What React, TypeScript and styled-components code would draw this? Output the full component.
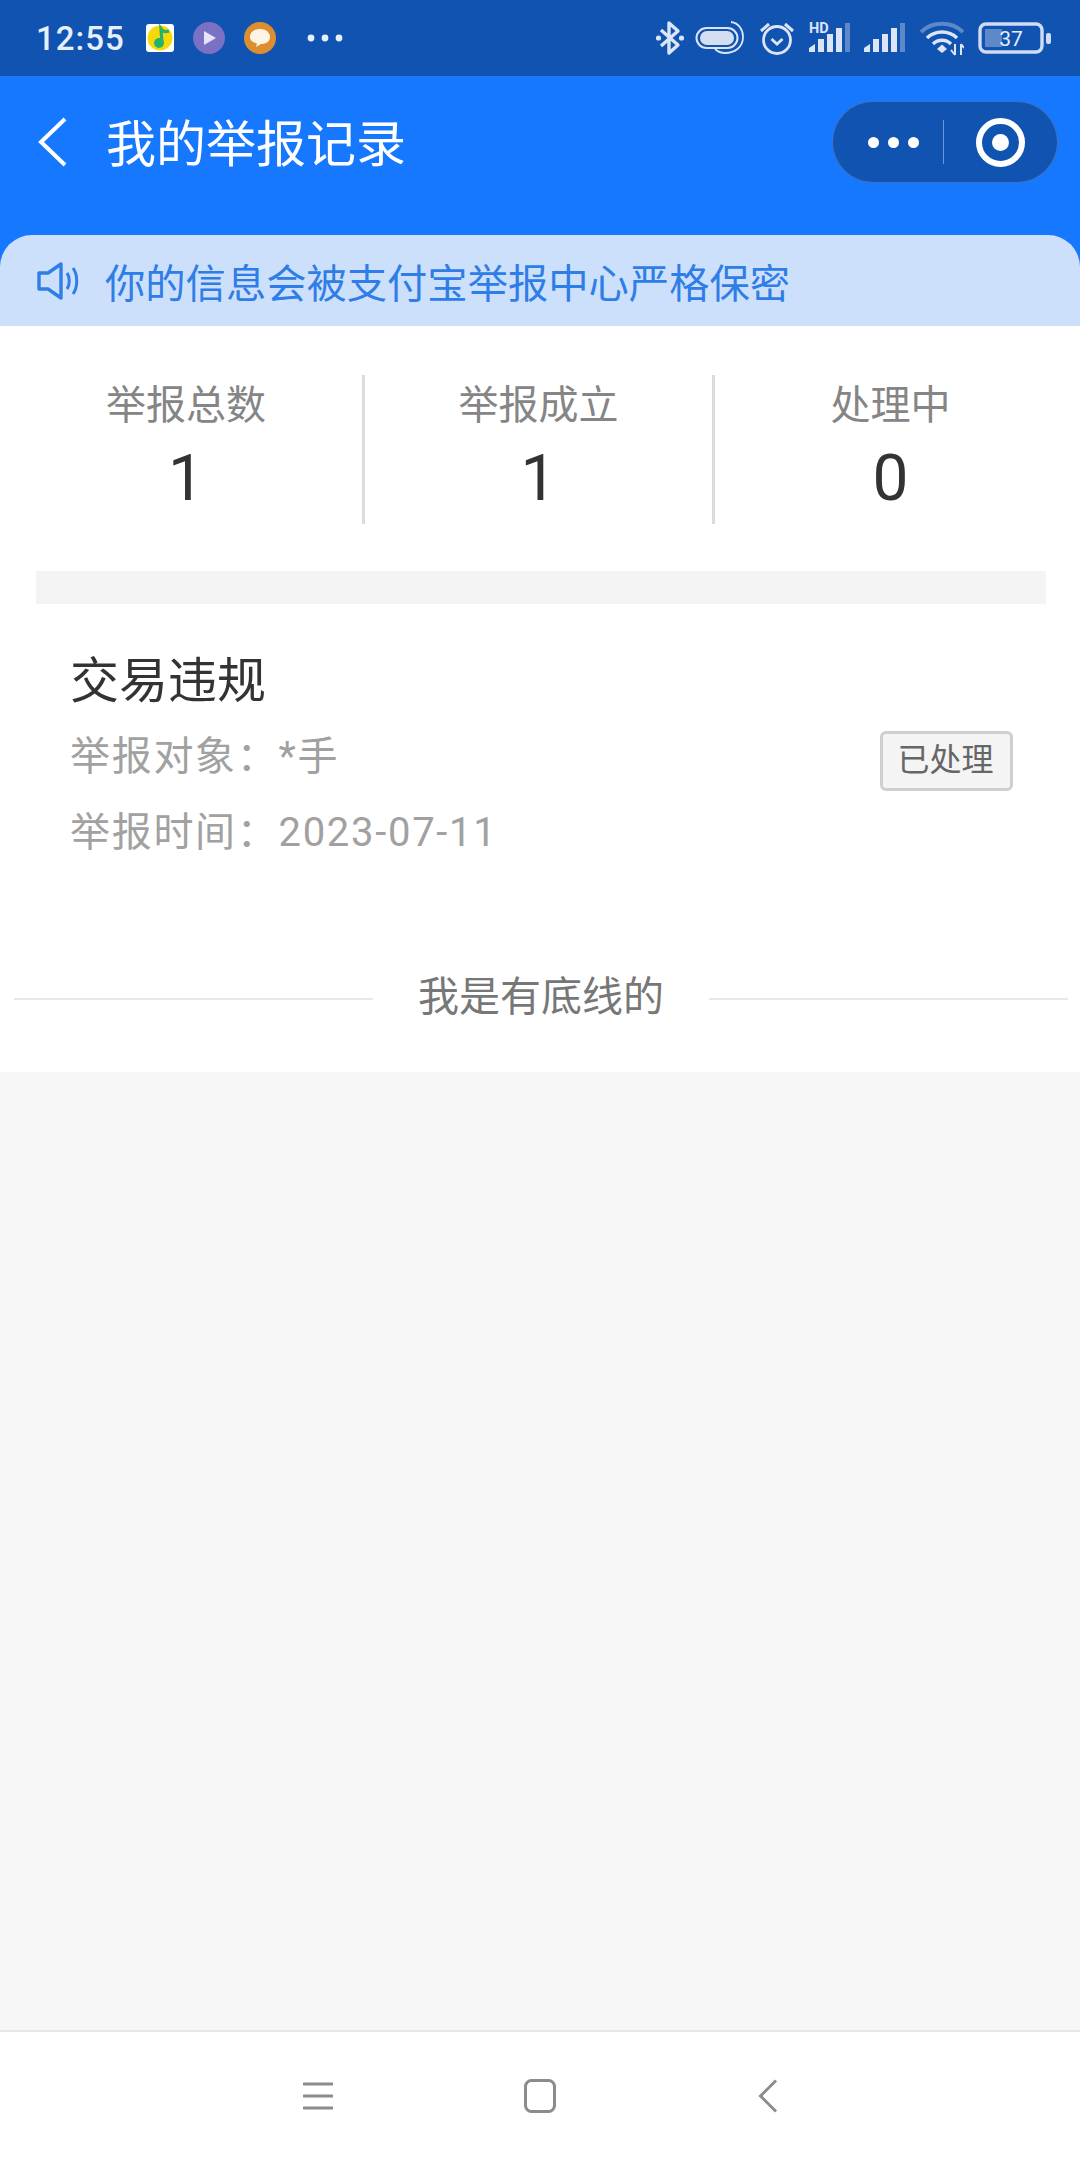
import React from "react";
import styled, { createGlobalStyle } from "styled-components";

const Global = createGlobalStyle`
  html, body { margin: 0; padding: 0; background: #f7f7f7; }
  * { box-sizing: border-box; }
  body { font-family: Roboto, "Noto Sans CJK SC", sans-serif; }
`;

const Page = styled.div`
  width: 1080px;
  height: 2160px;
  display: flex;
  flex-direction: column;
  background: #f7f7f7;
  overflow: hidden;
`;

const StatusBar = styled.div`
  height: 76px;
  flex: none;
  background: #1153b1;
  display: flex;
  align-items: center;
  justify-content: space-between;
  padding: 0 27px 0 36px;
`;

const StatusGroup = styled.div<{ $gap: number }>`
  display: flex;
  align-items: center;
  gap: ${(p) => p.$gap}px;
`;

const Clock = styled.span`
  font-size: 33px;
  font-weight: 500;
  letter-spacing: 1px;
  color: #e6effb;
  margin-right: 2px;
  line-height: 1;
`;

const StatusSvg = styled.svg<{ $nudge?: number }>`
  display: block;
  flex: none;
  margin-left: ${(p) => p.$nudge ?? 0}px;
`;

const HeaderBlock = styled.div`
  flex: none;
  height: 250px;
  background: #1677ff;
  display: flex;
  flex-direction: column;
  justify-content: space-between;
`;

const NavRow = styled.div`
  display: flex;
  align-items: center;
  justify-content: space-between;
  padding: 25px 22px 0 36px;
`;

const NavLeft = styled.div`
  display: flex;
  align-items: center;
  gap: 38px;
`;

const NavTitle = styled.h1`
  margin: 0 0 4px;
  font-family: "Noto Sans CJK SC", sans-serif;
  font-size: 50px;
  font-weight: 400;
  line-height: 1;
  color: #fff;
`;

const Capsule = styled.div`
  width: 226px;
  height: 82px;
  border-radius: 41px;
  background: #1153b1;
  border: 1px solid rgba(255, 255, 255, 0.18);
  display: flex;
  align-items: center;
`;

const CapsuleMenu = styled.div`
  width: 111px;
  height: 44px;
  display: flex;
  align-items: center;
  justify-content: center;
  gap: 9px;
  border-right: 1px solid rgba(255, 255, 255, 0.4);
  padding-left: 10px;
`;

const CapsuleDot = styled.span`
  width: 11px;
  height: 11px;
  border-radius: 50%;
  background: #fff;
`;

const CapsuleTarget = styled.div`
  flex: 1;
  display: flex;
  align-items: center;
  justify-content: center;
`;

const TargetRing = styled.span`
  width: 49px;
  height: 49px;
  border-radius: 50%;
  border: 6px solid #fff;
  display: flex;
  align-items: center;
  justify-content: center;
  &::after {
    content: "";
    width: 17px;
    height: 17px;
    border-radius: 50%;
    background: #fff;
  }
`;

const Notice = styled.div`
  height: 91px;
  background: #cde0fb;
  border-radius: 32px 32px 0 0;
  display: flex;
  align-items: center;
  gap: 26px;
  padding-left: 37px;
  font-family: "Noto Sans CJK SC", sans-serif;
  font-size: 40.3px;
  line-height: 1;
  color: #2f7de6;
`;

const NoticeText = styled.span`
  margin-top: 2px;
`;

const Sheet = styled.div`
  flex: none;
  height: 746px;
  background: #fff;
  display: flex;
  flex-direction: column;
`;

const Stats = styled.div`
  margin-top: 49px;
  height: 149px;
  display: grid;
  grid-template-columns: 355px 350px 1fr;
  padding: 0 14px 0 10px;
`;

const Stat = styled.div<{ $divider?: boolean }>`
  display: flex;
  flex-direction: column;
  align-items: center;
  padding-top: 2px;
  border-right: ${(p) => (p.$divider ? "3px solid #dcdcdc" : "none")};
`;

const StatLabel = styled.span`
  font-family: "Noto Sans CJK SC", sans-serif;
  font-size: 40px;
  line-height: 50px;
  color: #858585;
`;

const StatValue = styled.span`
  font-family: Roboto, sans-serif;
  font-size: 64px;
  line-height: 70px;
  margin-top: 17px;
  color: #333;
`;

const Band = styled.div`
  margin: 47px 34px 0 36px;
  height: 33px;
  background: #f4f4f4;
`;

const Card = styled.div`
  display: flex;
  align-items: flex-start;
  justify-content: space-between;
  padding: 46px 67px 0 70px;
`;

const CardBody = styled.div`
  display: flex;
  flex-direction: column;
`;

const CardTitle = styled.h2`
  margin: 0 0 15px;
  font-family: "Noto Sans CJK SC", sans-serif;
  font-size: 49px;
  line-height: 54px;
  font-weight: 400;
  color: #333;
`;

const CardMeta = styled.span`
  font-family: Roboto, "Noto Sans CJK SC", sans-serif;
  font-size: 40px;
  line-height: 76px;
  letter-spacing: 1.7px;
  color: #a1a1a1;
`;

const Badge = styled.span`
  width: 133px;
  height: 60px;
  margin-top: 81px;
  border: 3px solid #cfcfcf;
  border-radius: 6px;
  background: #f4f4f4;
  display: flex;
  align-items: center;
  justify-content: center;
  padding: 0 2px 8px 0;
  font-family: "Noto Sans CJK SC", sans-serif;
  font-size: 32px;
  line-height: 1;
  color: #666;
`;

const Baseline = styled.div`
  margin-top: 97px;
  padding: 0 12px 0 14px;
  display: flex;
  align-items: center;
  gap: 45px;
  font-family: "Noto Sans CJK SC", sans-serif;
  font-size: 41px;
  line-height: 50px;
  color: #777;
  &::before,
  &::after {
    content: "";
    flex: 1;
    height: 2px;
    background: #e8e8e8;
    margin-top: 11px;
  }
`;

const Spacer = styled.div`
  flex: 1;
`;

const NavBar = styled.div`
  flex: none;
  height: 130px;
  background: #fff;
  border-top: 2px solid #e8e8e8;
  display: flex;
  align-items: center;
  justify-content: center;
`;

const NavSlot = styled.div`
  width: 222px;
  display: flex;
  justify-content: center;
`;

const ChevronSlot = styled(NavSlot)`
  padding-left: 12px;
`;

const StatusIcons = () => (
  <StatusGroup $gap={13}>
    <StatusSvg width="30" height="36" viewBox="0 0 30 36" fill="none">
      <path d="M6 10 L23 25 L14 33 V3 L23 11 L6 26" stroke="#dbe5f6" strokeWidth="3.4" strokeLinejoin="round" />
      <circle cx="3.5" cy="18" r="2.6" fill="#dbe5f6" />
      <circle cx="26.5" cy="18" r="2.6" fill="#dbe5f6" />
    </StatusSvg>
    <StatusSvg $nudge={-3} width="50" height="36" viewBox="0 0 50 36" fill="none">
      <rect x="1.5" y="8" width="41" height="20" rx="10" stroke="#dbe5f6" strokeWidth="2" />
      <rect x="5" y="11" width="34" height="14" rx="7" fill="#d5dff2" />
      <path d="M36 2 C44 3 48 10 48 17 C48 27 40 33 30 33 C26 33 23 32 20 29" stroke="#dbe5f6" strokeWidth="1.8" />
    </StatusSvg>
    <StatusSvg width="38" height="36" viewBox="0 0 38 36" fill="none">
      <circle cx="19" cy="20" r="13.5" stroke="#dbe5f6" strokeWidth="2.8" />
      <path d="M13.5 19 L19 24 L24.5 19" stroke="#dbe5f6" strokeWidth="2.8" />
      <path d="M3 11 L11 4 M35 11 L27 4" stroke="#dbe5f6" strokeWidth="3" />
    </StatusSvg>
    <StatusSvg width="42" height="36" viewBox="0 0 42 36" fill="none">
      <text x="0" y="13" fontFamily="Roboto, sans-serif" fontSize="14.5" fontWeight="700" fill="#dbe5f6">HD</text>
      <path d="M0 32 V28 L6 24 V32 Z" fill="#dbe5f6" />
      <rect x="9" y="19" width="6" height="13" fill="#dbe5f6" />
      <rect x="18" y="14" width="6" height="18" fill="#dbe5f6" />
      <rect x="27" y="8" width="6" height="24" fill="#dbe5f6" />
      <rect x="36" y="3" width="5" height="29" fill="#5f88c9" />
    </StatusSvg>
    <StatusSvg width="41" height="36" viewBox="0 0 41 36" fill="none">
      <path d="M0 32 V28 L6 24 V32 Z" fill="#dbe5f6" />
      <rect x="9" y="19" width="6" height="13" fill="#dbe5f6" />
      <rect x="18" y="14" width="6" height="18" fill="#dbe5f6" />
      <rect x="27" y="8" width="6" height="24" fill="#dbe5f6" />
      <rect x="36" y="3" width="5" height="29" fill="#5f88c9" />
    </StatusSvg>
    <StatusSvg $nudge={2} width="44" height="36" viewBox="0 0 44 36" fill="none">
      <path d="M1 12 C12 1 32 1 43 12" stroke="#5f88c9" strokeWidth="4" />
      <path d="M7 18 C15 10 29 10 37 18" stroke="#dbe5f6" strokeWidth="3.4" />
      <path d="M13 24 C18 19 26 19 31 24" stroke="#dbe5f6" strokeWidth="3.4" />
      <path d="M17 29 L22 24.5 L27 29 L22 33 Z" fill="#dbe5f6" />
      <path d="M35 24 V35 M31 30 L35 35 M41 24 V35 M41 24 L44 28" stroke="#dbe5f6" strokeWidth="2" />
    </StatusSvg>
    <StatusSvg $nudge={1} width="75" height="32" viewBox="0 0 75 32" fill="none">
      <rect x="2" y="2" width="62" height="28" rx="6" stroke="#cfdcf2" strokeWidth="3.4" />
      <rect x="7" y="7" width="17" height="18" rx="1" fill="#5f88c9" />
      <rect x="68" y="11" width="5" height="11" rx="2" fill="#cfdcf2" />
      <text x="33" y="24" textAnchor="middle" fontFamily="Roboto, sans-serif" fontSize="21" fill="#e6effb">37</text>
    </StatusSvg>
  </StatusGroup>
);

const AppIcons = () => (
  <>
    <StatusSvg width="28" height="28" viewBox="0 0 28 28">
      <rect width="28" height="28" rx="3" fill="#fff" />
      <circle cx="14" cy="14" r="12.5" fill="#f5d90a" />
      <circle cx="13" cy="19" r="5" fill="#23b36b" />
      <path d="M16 19 L15 5 C17 8 20 8 23 7" stroke="#23b36b" strokeWidth="3.2" fill="none" />
    </StatusSvg>
    <StatusSvg width="32" height="32" viewBox="0 0 32 32">
      <circle cx="16" cy="16" r="16" fill="#7a70c4" />
      <path d="M11 9 L23 16 L11 23 Z" fill="#e6e2fa" />
    </StatusSvg>
    <StatusSvg width="32" height="32" viewBox="0 0 32 32">
      <circle cx="16" cy="16" r="16" fill="#dd8f30" />
      <path d="M16 7 C22 7 26 10.5 26 15 C26 19.5 22 22 17 22 L12 25 L13 21.5 C9 20.5 6 18.5 6 15 C6 10.5 10 7 16 7 Z" fill="#fdf4e3" />
    </StatusSvg>
    <StatusSvg $nudge={12} width="36" height="8" viewBox="0 0 36 8">
      <circle cx="4" cy="4" r="3.4" fill="#e6effb" />
      <circle cx="18" cy="4" r="3.4" fill="#e6effb" />
      <circle cx="32" cy="4" r="3.4" fill="#e6effb" />
    </StatusSvg>
  </>
);

export default function App() {
  return (
    <Page>
      <Global />
      <StatusBar>
        <StatusGroup $gap={19}>
          <Clock>12:55</Clock>
          <AppIcons />
        </StatusGroup>
        <StatusIcons />
      </StatusBar>

      <HeaderBlock>
        <NavRow>
          <NavLeft>
            <StatusSvg width="32" height="50" viewBox="0 0 32 50" fill="none">
              <path d="M29 2 L5 25 L29 48" stroke="#fff" strokeWidth="4" />
            </StatusSvg>
            <NavTitle>我的举报记录</NavTitle>
          </NavLeft>
          <Capsule>
            <CapsuleMenu>
              <CapsuleDot />
              <CapsuleDot />
              <CapsuleDot />
            </CapsuleMenu>
            <CapsuleTarget>
              <TargetRing />
            </CapsuleTarget>
          </Capsule>
        </NavRow>
        <Notice>
          <StatusSvg width="42" height="38" viewBox="0 0 42 38" fill="none">
            <path d="M2 11 H11 L24 2 V36 L11 27 H2 Z" stroke="#2f7de6" strokeWidth="3.4" strokeLinejoin="round" />
            <path d="M30 11 C33 15 33 23 30 27" stroke="#2f7de6" strokeWidth="3" />
            <path d="M36 6 C41 13 41 25 36 32" stroke="#2f7de6" strokeWidth="3" />
          </StatusSvg>
          <NoticeText>你的信息会被支付宝举报中心严格保密</NoticeText>
        </Notice>
      </HeaderBlock>

      <Sheet>
        <Stats>
          <Stat $divider>
            <StatLabel>举报总数</StatLabel>
            <StatValue>1</StatValue>
          </Stat>
          <Stat $divider>
            <StatLabel>举报成立</StatLabel>
            <StatValue>1</StatValue>
          </Stat>
          <Stat>
            <StatLabel>处理中</StatLabel>
            <StatValue>0</StatValue>
          </Stat>
        </Stats>
        <Band />
        <Card>
          <CardBody>
            <CardTitle>交易违规</CardTitle>
            <CardMeta>举报对象：*手</CardMeta>
            <CardMeta>举报时间：2023-07-11</CardMeta>
          </CardBody>
          <Badge>已处理</Badge>
        </Card>
        <Baseline>我是有底线的</Baseline>
      </Sheet>

      <Spacer />

      <NavBar>
        <NavSlot>
          <StatusSvg width="30" height="30" viewBox="0 0 30 30" fill="none">
            <path d="M1 3 H29 M1 15 H29 M1 27 H29" stroke="#8c8c8c" strokeWidth="3" strokeLinecap="round" />
          </StatusSvg>
        </NavSlot>
        <NavSlot>
          <StatusSvg width="32" height="34" viewBox="0 0 32 34" fill="none">
            <rect x="1.5" y="1.5" width="29" height="31" rx="6" stroke="#8c8c8c" strokeWidth="3" />
          </StatusSvg>
        </NavSlot>
        <ChevronSlot>
          <StatusSvg width="20" height="34" viewBox="0 0 20 34" fill="none">
            <path d="M18 1.5 L2.5 17 L18 32.5" stroke="#8c8c8c" strokeWidth="3" />
          </StatusSvg>
        </ChevronSlot>
      </NavBar>
    </Page>
  );
}
